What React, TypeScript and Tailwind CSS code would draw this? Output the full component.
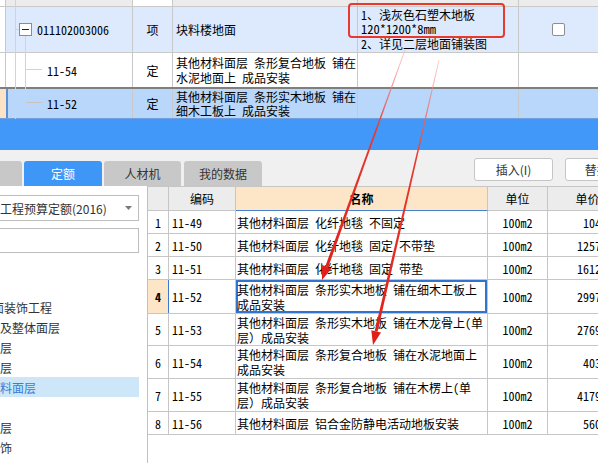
import React from "react";

type Row = {
  h: string;
  num: string;
  code: string;
  lines: string[];
  price: string;
  pad: string;
  active?: boolean;
};

const rows: Row[] = [
  { h: "h-[23px]", num: "1", code: "11-49", lines: ["其他材料面层 化纤地毯 不固定"], price: "1049.27", pad: "pl-[35px]" },
  { h: "h-[23px]", num: "2", code: "11-50", lines: ["其他材料面层 化纤地毯 固定 不带垫"], price: "12573.6", pad: "pl-[29px]" },
  { h: "h-[23px]", num: "3", code: "11-51", lines: ["其他材料面层 化纤地毯 固定 带垫"], price: "16126.9", pad: "pl-[29px]" },
  { h: "h-[34px]", num: "4", code: "11-52", lines: ["其他材料面层 条形实木地板 铺在细木工板上", "成品安装"], price: "29971.6", pad: "pl-[29px]", active: true },
  { h: "h-[32px]", num: "5", code: "11-53", lines: ["其他材料面层 条形实木地板 铺在木龙骨上(单", "层）成品安装"], price: "27693.4", pad: "pl-[29px]" },
  { h: "h-[33px]", num: "6", code: "11-54", lines: ["其他材料面层 条形复合地板 铺在水泥地面上", "成品安装"], price: "4033.38", pad: "pl-[35px]" },
  { h: "h-[33px]", num: "7", code: "11-55", lines: ["其他材料面层 条形复合地板 铺在木楞上(单", "层）成品安装"], price: "41790.2", pad: "pl-[29px]" },
  { h: "h-[23px]", num: "8", code: "11-56", lines: ["其他材料面层 铝合金防静电活动地板安装"], price: "5605.91", pad: "pl-[35px]" },
];

function TopGrid() {
  return (
    <div className="relative">
      <div className="flex h-[7px] border-b border-[#c9c9c9]">
        <div className="w-[6px] shrink-0 border-r border-[#c9c9c9] bg-white" />
        <div className="w-[127px] shrink-0 border-r border-[#c9c9c9] bg-[#ececec]" />
        <div className="w-[40px] shrink-0 border-r border-[#c9c9c9] bg-white" />
        <div className="w-[185px] shrink-0 border-r border-[#c9c9c9] bg-[#ececec]" />
        <div className="w-[161px] shrink-0 border-r border-[#c9c9c9] bg-[#ececec]" />
        <div className="flex-1 bg-[#ececec]" />
      </div>

      {/* row 1 */}
      <div className="flex h-[46px] border-b border-[#c9c9c9] bg-[#dde9fc]">
        <div className="w-[6px] shrink-0 border-r border-[#c9c9c9] bg-white" />
        <div className="flex w-[127px] shrink-0 items-center border-r border-[#c9c9c9] pl-[13px]">
          <div className="relative flex h-[13px] w-[13px] items-center justify-center border border-[#8c8c8c] bg-white">
            <div className="h-[1px] w-[7px] bg-[#222]" />
          </div>
          <span className="ml-[5px]">011102003006</span>
        </div>
        <div className="flex w-[40px] shrink-0 items-center justify-center border-r border-[#c9c9c9]">项</div>
        <div className="flex w-[185px] shrink-0 items-center border-r border-[#c9c9c9] pl-[3px]">块料楼地面</div>
        <div className="flex w-[161px] shrink-0 flex-col justify-center border-r border-[#c9c9c9] pl-[3px] leading-[14.5px]">
          <div>1、浅灰色石塑木地板</div>
          <div className="text-[12.5px]">120*1200*8mm</div>
          <div>2、详见二层地面铺装图</div>
        </div>
        <div className="flex flex-1 items-center justify-center">
          <div className="h-[13px] w-[13px] rounded-[2px] border border-[#8e8e8e] bg-white" />
        </div>
      </div>

      {/* row 2 */}
      <div className="flex h-[36px] border-b-2 border-[#7f7f7f] bg-white">
        <div className="w-[6px] shrink-0 border-r border-[#c9c9c9] bg-white" />
        <div className="flex w-[127px] shrink-0 items-center border-r border-[#c9c9c9] pl-[41px]">11-54</div>
        <div className="flex w-[40px] shrink-0 items-center justify-center border-r border-[#c9c9c9]">定</div>
        <div className="flex w-[185px] shrink-0 flex-col justify-center border-r border-[#c9c9c9] pl-[3px] leading-[15px]">
          <div className="whitespace-nowrap">其他材料面层 条形复合地板 铺在</div>
          <div className="whitespace-nowrap">水泥地面上 成品安装</div>
        </div>
        <div className="w-[161px] shrink-0 border-r border-[#c9c9c9]" />
        <div className="flex-1" />
      </div>

      {/* row 3 */}
      <div className="flex h-[30px] border-b border-[#6f9fdc] bg-[#b9d6fb]">
        <div className="w-[8px] shrink-0 border-r-2 border-[#5b8fd6] bg-[#fde3c5]" />
        <div className="flex w-[125px] shrink-0 items-center border-r border-[#c9c9c9] pl-[39px]">11-52</div>
        <div className="flex w-[40px] shrink-0 items-center justify-center border-r border-[#c9c9c9]">定</div>
        <div className="flex w-[185px] shrink-0 flex-col justify-center overflow-hidden border-r border-[#c9c9c9] pl-[3px] leading-[14px]">
          <div className="whitespace-nowrap">其他材料面层 条形实木地板 铺在</div>
          <div className="whitespace-nowrap">细木工板上 成品安装</div>
        </div>
        <div className="w-[161px] shrink-0 border-r border-[#c9c9c9]" />
        <div className="flex-1" />
      </div>

      <svg className="pointer-events-none absolute left-0 top-0" width="50" height="119">
        <g stroke="#f0cf9f" strokeWidth="1" shapeRendering="crispEdges">
          <line x1="15.5" y1="0" x2="15.5" y2="119" />
          <line x1="15.5" y1="29.5" x2="19" y2="29.5" />
          <line x1="25.5" y1="36" x2="25.5" y2="102" />
          <line x1="25.5" y1="69.5" x2="42" y2="69.5" />
          <line x1="25.5" y1="102.5" x2="42" y2="102.5" stroke="#c9c2b8" />
        </g>
      </svg>
    </div>
  );
}

function Toolbar() {
  return (
    <div className="flex h-[36px] bg-[#f0f0f0] font-['Noto_Sans_CJK_SC',sans-serif] text-[12px]">
      <div className="flex shrink-0 items-end">
        <div className="h-[25px] w-[22px] rounded-tr-[3px] bg-[#c8c8c8]" />
        <div className="ml-[2px] flex h-[25px] w-[78px] items-center justify-center rounded-t-[3px] bg-[#3e96f6] text-white">定额</div>
        <div className="ml-[2px] flex h-[25px] w-[77px] items-center justify-center rounded-t-[3px] bg-[#c8c8c8] text-[#333]">人材机</div>
        <div className="ml-[3px] flex h-[25px] w-[78px] items-center justify-center rounded-t-[3px] bg-[#c8c8c8] text-[#333]">我的数据</div>
      </div>
      <div className="ml-[212px] mt-[8px] flex shrink-0 gap-[12px]">
        <div className="flex h-[23px] w-[79px] shrink-0 items-center justify-center rounded-[3px] border border-[#c5c5c5] bg-white text-[#333]">插入(I)</div>
        <div className="flex h-[23px] w-[79px] shrink-0 items-center justify-center rounded-[3px] border border-[#c5c5c5] bg-white text-[#333]">替换(R)</div>
      </div>
    </div>
  );
}

function LeftPanel() {
  const items: { t: string; cls?: string; sel?: boolean }[] = [
    { t: "面装饰工程", cls: "-ml-[8px]" },
    { t: "及整体面层" },
    { t: "层" },
    { t: "层" },
    { t: "料面层", sel: true },
    { t: "" },
    { t: "层" },
    { t: "饰" },
    { t: "面层" },
  ];
  return (
    <div className="w-[147px] shrink-0 overflow-hidden bg-white font-['Noto_Sans_CJK_SC',sans-serif] text-[12px] text-[#333]">
      <div className="mt-[9px] flex h-[26px] w-[139px] items-center justify-between border border-l-0 border-[#bdbdbd] pr-[6px]">
        <span className="whitespace-nowrap">工程预算定额(2016)</span>
        <svg width="7" height="4" viewBox="0 0 7 4">
          <path d="M0 0 L7 0 L3.5 4 Z" fill="#7a7a7a" />
        </svg>
      </div>
      <div className="mt-[7px] h-[25px] w-[139px] border border-l-0 border-[#bdbdbd]" />
      <div className="mt-[44px]">
        {items.map((it, i) => (
          <div
            key={i}
            className={`flex h-[20px] w-[139px] items-center whitespace-nowrap ${it.sel ? "bg-[#cde6f8] text-[#3a7bd5]" : ""}`}
          >
            <span className={it.cls ?? ""}>{it.t}</span>
          </div>
        ))}
      </div>
    </div>
  );
}

function QuotaTable() {
  return (
    <div className="min-w-0 flex-1 overflow-hidden border-l border-[#c0c0c0] bg-white">
      <div className="flex h-[25px] border-t border-[#c6c6c6]">
        <div className="w-[21px] shrink-0 border-b border-r border-[#c6c6c6] bg-[#ececec]" />
        <div className="flex w-[67px] shrink-0 items-center justify-center border-b border-r border-[#c6c6c6] bg-[#ececec]">编码</div>
        <div className="flex w-[252px] shrink-0 items-center justify-center border-b border-r border-[#c6c6c6] border-b-[#4a80d0] bg-[#fde5c7] font-bold">名称</div>
        <div className="flex w-[60px] shrink-0 items-center justify-center border-b border-r border-[#c6c6c6] bg-[#ececec]">单位</div>
        <div className="flex w-[80px] shrink-0 items-center justify-center border-b border-r border-[#c6c6c6] bg-[#ececec]">单价</div>
      </div>
      {rows.map((r) => (
        <div key={r.num} className={`flex ${r.h} border-b border-[#c6c6c6]`}>
          <div
            className={`flex w-[21px] shrink-0 items-center justify-center border-r ${
              r.active ? "border-[#3b78d0] bg-[#fde5c7] font-bold" : "border-[#c6c6c6]"
            }`}
          >
            {r.num}
          </div>
          <div className="flex w-[67px] shrink-0 items-center border-r border-[#c6c6c6] pl-[3px]">{r.code}</div>
          <div
            className={`flex w-[252px] shrink-0 flex-col justify-center border-r border-[#c6c6c6] pl-[1px] leading-[15px] ${
              r.active ? "shadow-[inset_0_0_0_2px_#3273d0]" : ""
            }`}
          >
            {r.lines.map((l, i) => (
              <div key={i} className="whitespace-pre">
                {l}
              </div>
            ))}
          </div>
          <div className="flex w-[60px] shrink-0 items-center justify-center border-r border-[#c6c6c6]">100m2</div>
          <div className={`flex w-[80px] shrink-0 items-center whitespace-nowrap ${r.pad}`}>{r.price}</div>
        </div>
      ))}
    </div>
  );
}

function Annotations() {
  return (
    <>
      <div className="pointer-events-none absolute left-[348px] top-[3px] h-[35px] w-[157px] rounded-[4px] border-2 border-[#e8392f]" />
      <svg className="pointer-events-none absolute left-0 top-0" width="598" height="463">
        <defs>
          <linearGradient id="ga" gradientUnits="userSpaceOnUse" x1="405" y1="50" x2="322" y2="280">
            <stop offset="0" stopColor="#f4a3a3" stopOpacity="0.6" />
            <stop offset="0.35" stopColor="#e6392f" />
            <stop offset="1" stopColor="#e01f18" />
          </linearGradient>
          <linearGradient id="gb" gradientUnits="userSpaceOnUse" x1="439" y1="60" x2="373" y2="345">
            <stop offset="0" stopColor="#f4a3a3" stopOpacity="0.6" />
            <stop offset="0.35" stopColor="#e6392f" />
            <stop offset="1" stopColor="#e01f18" />
          </linearGradient>
        </defs>
        <polygon points="405.4,50.1 328.2,267.3 325.3,266.3 404.6,49.9" fill="url(#ga)" />
        <polygon points="322,280 331.5,268.5 322.1,265.1" fill="#e01f18" />
        <polygon points="439.4,60.1 377.6,331.7 374.7,331.0 438.6,59.9" fill="url(#gb)" />
        <polygon points="373,345 381,332.5 371.3,330.2" fill="#e01f18" />
      </svg>
    </>
  );
}

export default function App() {
  return (
    <div className="relative h-[463px] w-[598px] overflow-hidden bg-white text-[12px] leading-[15px] text-black font-['Noto_Sans_Mono_CJK_SC','Noto_Sans_CJK_SC',sans-serif]">
      <TopGrid />
      <div className="h-[31px] bg-[#4198f9]" />
      <Toolbar />
      <div className="flex h-[277px]">
        <LeftPanel />
        <QuotaTable />
      </div>
      <Annotations />
    </div>
  );
}
